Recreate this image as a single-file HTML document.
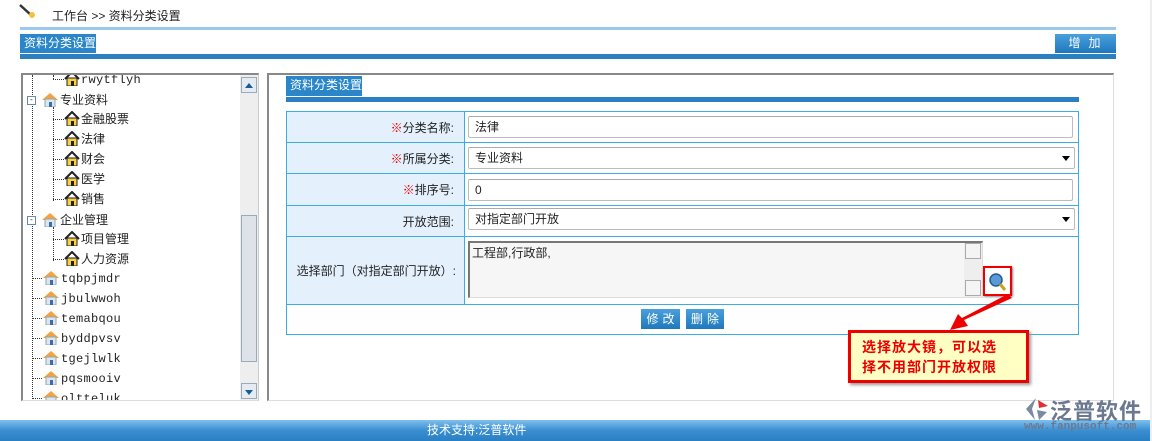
<!DOCTYPE html>
<html><head><meta charset="utf-8"><style>
*{margin:0;padding:0;box-sizing:border-box}
body{width:1152px;height:441px;overflow:hidden;background:#fff;font-family:"Liberation Sans","Noto Sans CJK SC",sans-serif;font-size:12px;color:#222;position:relative}
.a{position:absolute}
.tab{background:#2a86c8;color:#fff;font-size:12px;line-height:19px;padding-left:4px}
.bar{background:#2a80c0}
.tree div.r{position:absolute;left:0;height:20px;line-height:20px;font-size:12px;white-space:nowrap}
.mono{font-family:"Liberation Mono",monospace;font-size:11px;letter-spacing:0.3px}
.hm{display:inline-block;width:16px;height:15px;vertical-align:-3px;margin-right:1px}
td{border:1px solid #3aaee0}
.lab{background:#e4f1fd;text-align:right;padding-right:10px;width:178px}
.inp{position:absolute;border:1px solid #bbb;border-top-color:#aaa;border-radius:2px;background:#fff;height:22px;line-height:20px;padding-left:6px;font-size:12px}
.red{color:#e00}
.btn{position:absolute;background:linear-gradient(#4aa0dc,#1f78bd);color:#fff;text-align:center;line-height:20px;letter-spacing:4px;font-size:12px}
</style></head><body>
<svg class="a" style="left:18px;top:3px" width="20" height="16"><line x1="2" y1="2" x2="13" y2="12" stroke="#333" stroke-width="2.5"/><circle cx="14" cy="12" r="3" fill="#f6c23c"/></svg>
<div class="a" style="left:52px;top:7px;font-size:12px">工作台 &gt;&gt; 资料分类设置</div>
<div class="a" style="left:20px;top:27px;width:1096px;height:3px;background:#9ccaee"></div>
<div class="a tab" style="left:20px;top:34px;width:76px;height:19px">资料分类设置</div>
<div class="a btn" style="left:1055px;top:34px;width:61px;height:19px;line-height:19px;letter-spacing:8px;padding-left:6px">增加</div>
<div class="a bar" style="left:20px;top:54px;width:1096px;height:5px"></div>
<div class="a" style="left:1150px;top:0;width:2px;height:441px;background:#eee"></div>

<div class="a tree" style="left:21px;top:73px;width:238px;height:328px;border-top:2px solid #888;border-left:2px solid #888;border-right:1px solid #ccc;border-bottom:1px solid #ddd;overflow:hidden">
<div class="a" style="left:9px;top:0;height:330px;border-left:1px dotted #333"></div>
<div class="a" style="left:30px;top:0;height:4px;border-left:1px dotted #333"></div>
<div class="a" style="left:30px;top:32px;height:94px;border-left:1px dotted #333"></div>
<div class="a" style="left:30px;top:152px;height:34px;border-left:1px dotted #333"></div>
<div class="r mono" style="left:30px;top:-5px"><span style="border-top:1px dotted #333;display:inline-block;width:11px;vertical-align:middle"></span><svg class="hm" viewBox="0 0 16 15"><path d="M1 8L8 1L15 8" fill="none" stroke="#222" stroke-width="2"/><rect x="3" y="7" width="10" height="8" fill="#f8d040" stroke="#222"/><rect x="7" y="10" width="3" height="5" fill="#222"/></svg>rwytflyh</div>
<div class="r" style="left:4px;top:15px"><span style="display:inline-block;width:9px;height:9px;border:1px solid #6a8aa8;background:#fff;vertical-align:middle;font-size:8px;line-height:6px;text-align:center">-</span><svg class="hm" style="width:18px;margin-left:5px" viewBox="0 0 16 15"><path d="M0 8L8 1L16 8" fill="#f7a040"/><rect x="3" y="7" width="10" height="8" fill="#dbe6f2" stroke="#8aa"/><rect x="7" y="10" width="3" height="5" fill="#3d6ca8"/></svg>专业资料</div>
<div class="r" style="left:30px;top:34px"><span style="border-top:1px dotted #333;display:inline-block;width:11px;vertical-align:middle"></span><svg class="hm" viewBox="0 0 16 15"><path d="M1 8L8 1L15 8" fill="none" stroke="#222" stroke-width="2"/><rect x="3" y="7" width="10" height="8" fill="#f8d040" stroke="#222"/><rect x="7" y="10" width="3" height="5" fill="#222"/></svg>金融股票</div>
<div class="r" style="left:30px;top:54px"><span style="border-top:1px dotted #333;display:inline-block;width:11px;vertical-align:middle"></span><svg class="hm" viewBox="0 0 16 15"><path d="M1 8L8 1L15 8" fill="none" stroke="#222" stroke-width="2"/><rect x="3" y="7" width="10" height="8" fill="#f8d040" stroke="#222"/><rect x="7" y="10" width="3" height="5" fill="#222"/></svg>法律</div>
<div class="r" style="left:30px;top:74px"><span style="border-top:1px dotted #333;display:inline-block;width:11px;vertical-align:middle"></span><svg class="hm" viewBox="0 0 16 15"><path d="M1 8L8 1L15 8" fill="none" stroke="#222" stroke-width="2"/><rect x="3" y="7" width="10" height="8" fill="#f8d040" stroke="#222"/><rect x="7" y="10" width="3" height="5" fill="#222"/></svg>财会</div>
<div class="r" style="left:30px;top:94px"><span style="border-top:1px dotted #333;display:inline-block;width:11px;vertical-align:middle"></span><svg class="hm" viewBox="0 0 16 15"><path d="M1 8L8 1L15 8" fill="none" stroke="#222" stroke-width="2"/><rect x="3" y="7" width="10" height="8" fill="#f8d040" stroke="#222"/><rect x="7" y="10" width="3" height="5" fill="#222"/></svg>医学</div>
<div class="r" style="left:30px;top:114px"><span style="border-top:1px dotted #333;display:inline-block;width:11px;vertical-align:middle"></span><svg class="hm" viewBox="0 0 16 15"><path d="M1 8L8 1L15 8" fill="none" stroke="#222" stroke-width="2"/><rect x="3" y="7" width="10" height="8" fill="#f8d040" stroke="#222"/><rect x="7" y="10" width="3" height="5" fill="#222"/></svg>销售</div>
<div class="r" style="left:4px;top:135px"><span style="display:inline-block;width:9px;height:9px;border:1px solid #6a8aa8;background:#fff;vertical-align:middle;font-size:8px;line-height:6px;text-align:center">-</span><svg class="hm" style="width:18px;margin-left:5px" viewBox="0 0 16 15"><path d="M0 8L8 1L16 8" fill="#f7a040"/><rect x="3" y="7" width="10" height="8" fill="#dbe6f2" stroke="#8aa"/><rect x="7" y="10" width="3" height="5" fill="#3d6ca8"/></svg>企业管理</div>
<div class="r" style="left:30px;top:154px"><span style="border-top:1px dotted #333;display:inline-block;width:11px;vertical-align:middle"></span><svg class="hm" viewBox="0 0 16 15"><path d="M1 8L8 1L15 8" fill="none" stroke="#222" stroke-width="2"/><rect x="3" y="7" width="10" height="8" fill="#f8d040" stroke="#222"/><rect x="7" y="10" width="3" height="5" fill="#222"/></svg>项目管理</div>
<div class="r" style="left:30px;top:174px"><span style="border-top:1px dotted #333;display:inline-block;width:11px;vertical-align:middle"></span><svg class="hm" viewBox="0 0 16 15"><path d="M1 8L8 1L15 8" fill="none" stroke="#222" stroke-width="2"/><rect x="3" y="7" width="10" height="8" fill="#f8d040" stroke="#222"/><rect x="7" y="10" width="3" height="5" fill="#222"/></svg>人力资源</div>
<div class="r mono" style="left:9px;top:194px"><span style="border-top:1px dotted #333;display:inline-block;width:10px;vertical-align:middle"></span><svg class="hm" style="width:18px" viewBox="0 0 16 15"><path d="M0 8L8 1L16 8" fill="#f7a040"/><rect x="3" y="7" width="10" height="8" fill="#dbe6f2" stroke="#8aa"/><rect x="7" y="10" width="3" height="5" fill="#3d6ca8"/></svg>tqbpjmdr</div>
<div class="r mono" style="left:9px;top:214px"><span style="border-top:1px dotted #333;display:inline-block;width:10px;vertical-align:middle"></span><svg class="hm" style="width:18px" viewBox="0 0 16 15"><path d="M0 8L8 1L16 8" fill="#f7a040"/><rect x="3" y="7" width="10" height="8" fill="#dbe6f2" stroke="#8aa"/><rect x="7" y="10" width="3" height="5" fill="#3d6ca8"/></svg>jbulwwoh</div>
<div class="r mono" style="left:9px;top:234px"><span style="border-top:1px dotted #333;display:inline-block;width:10px;vertical-align:middle"></span><svg class="hm" style="width:18px" viewBox="0 0 16 15"><path d="M0 8L8 1L16 8" fill="#f7a040"/><rect x="3" y="7" width="10" height="8" fill="#dbe6f2" stroke="#8aa"/><rect x="7" y="10" width="3" height="5" fill="#3d6ca8"/></svg>temabqou</div>
<div class="r mono" style="left:9px;top:254px"><span style="border-top:1px dotted #333;display:inline-block;width:10px;vertical-align:middle"></span><svg class="hm" style="width:18px" viewBox="0 0 16 15"><path d="M0 8L8 1L16 8" fill="#f7a040"/><rect x="3" y="7" width="10" height="8" fill="#dbe6f2" stroke="#8aa"/><rect x="7" y="10" width="3" height="5" fill="#3d6ca8"/></svg>byddpvsv</div>
<div class="r mono" style="left:9px;top:274px"><span style="border-top:1px dotted #333;display:inline-block;width:10px;vertical-align:middle"></span><svg class="hm" style="width:18px" viewBox="0 0 16 15"><path d="M0 8L8 1L16 8" fill="#f7a040"/><rect x="3" y="7" width="10" height="8" fill="#dbe6f2" stroke="#8aa"/><rect x="7" y="10" width="3" height="5" fill="#3d6ca8"/></svg>tgejlwlk</div>
<div class="r mono" style="left:9px;top:294px"><span style="border-top:1px dotted #333;display:inline-block;width:10px;vertical-align:middle"></span><svg class="hm" style="width:18px" viewBox="0 0 16 15"><path d="M0 8L8 1L16 8" fill="#f7a040"/><rect x="3" y="7" width="10" height="8" fill="#dbe6f2" stroke="#8aa"/><rect x="7" y="10" width="3" height="5" fill="#3d6ca8"/></svg>pqsmooiv</div>
<div class="r mono" style="left:9px;top:314px"><span style="border-top:1px dotted #333;display:inline-block;width:10px;vertical-align:middle"></span><svg class="hm" style="width:18px" viewBox="0 0 16 15"><path d="M0 8L8 1L16 8" fill="#f7a040"/><rect x="3" y="7" width="10" height="8" fill="#dbe6f2" stroke="#8aa"/><rect x="7" y="10" width="3" height="5" fill="#3d6ca8"/></svg>oltteluk</div>
<div class="a" style="left:217px;top:0;width:18px;height:326px;background:#eee"></div>
<div class="a" style="left:218px;top:2px;width:16px;height:16px;background:#e4ecf2;border:1px solid #9ab"><div style="margin:5px auto 0;width:0;height:0;border:4px solid transparent;border-bottom:5px solid #1a5a9a;border-top:0"></div></div>
<div class="a" style="left:218px;top:140px;width:16px;height:147px;background:#dde3e8;border:1px solid #9ab"></div>
<div class="a" style="left:218px;top:308px;width:16px;height:16px;background:#e4ecf2;border:1px solid #9ab"><div style="margin:6px auto 0;width:0;height:0;border:4px solid transparent;border-top:5px solid #1a5a9a;border-bottom:0"></div></div>
</div>

<div class="a" style="left:267px;top:73px;width:847px;height:328px;border-top:2px solid #888;border-left:2px solid #888;border-right:1px solid #ddd;border-bottom:1px solid #ddd"></div>
<div class="a tab" style="left:286px;top:76px;width:76px;height:20px">资料分类设置</div>
<div class="a bar" style="left:286px;top:97px;width:793px;height:5px"></div>

<table class="a" style="left:286px;top:111px;width:793px;border-collapse:collapse;font-size:12px">
<tr style="height:31px"><td class="lab"><span class="red">※</span>分类名称:</td><td></td></tr>
<tr style="height:31px"><td class="lab"><span class="red">※</span>所属分类:</td><td></td></tr>
<tr style="height:32px"><td class="lab"><span class="red">※</span>排序号:</td><td></td></tr>
<tr style="height:31px"><td class="lab">开放范围:</td><td></td></tr>
<tr style="height:68px"><td class="lab" style="padding-right:8px">选择部门（对指定部门开放）:</td><td></td></tr>
<tr style="height:30px"><td colspan="2"></td></tr>
</table>
<div class="inp" style="left:468px;top:116px;width:605px">法律</div>
<div class="inp" style="left:468px;top:147px;width:607px">专业资料<span style="position:absolute;right:4px;top:8px;border:4px solid transparent;border-top:5px solid #000"></span></div>
<div class="inp" style="left:468px;top:179px;width:605px">0</div>
<div class="inp" style="left:468px;top:208px;width:607px">对指定部门开放<span style="position:absolute;right:4px;top:8px;border:4px solid transparent;border-top:5px solid #000"></span></div>
<div class="a" style="left:468px;top:241px;width:515px;height:57px;background:#f6f6f6;border:2px solid #777;border-right:1px solid #ddd;border-bottom:1px solid #ddd;padding:1px 2px;font-size:12px">工程部,行政部,</div>
<div class="a" style="left:964px;top:243px;width:18px;height:54px;background:#eee"></div>
<div class="a" style="left:965px;top:243px;width:16px;height:16px;background:#f4f4f4;border:1px solid #aaa"></div>
<div class="a" style="left:965px;top:280px;width:16px;height:16px;background:#f4f4f4;border:1px solid #aaa"></div>
<div class="a" style="left:983px;top:266px;width:29px;height:30px;border:2px solid #e00;box-shadow:1px 1px 2px #888"></div>
<svg class="a" style="left:988px;top:272px" width="20" height="20"><circle cx="8" cy="8" r="6" fill="#5a9ad8" stroke="#245a90" stroke-width="1.5"/><line x1="12" y1="12" x2="17" y2="18" stroke="#c8a020" stroke-width="3"/></svg>
<div class="btn" style="left:641px;top:309px;width:39px;height:20px;padding-left:4px">修改</div>
<div class="btn" style="left:686px;top:309px;width:38px;height:20px;padding-left:4px">删除</div>

<svg class="a" style="left:940px;top:290px" width="80" height="50"><polygon points="68,4 72,8 24,30 28,36 10,40 18,24 22,28" fill="#e00"/></svg>
<div class="a" style="left:848px;top:330px;width:181px;height:53px;background:#ffffc4;border:3px solid #e00;box-shadow:2px 2px 3px #999;color:#e00;font-weight:bold;font-size:14px;line-height:20px;padding:4px 0 0 11px;letter-spacing:1px">选择放大镜，可以选<br>择不用部门开放权限</div>

<div class="a" style="left:0;top:420px;width:1150px;height:21px;background:linear-gradient(#7ec0ee,#3a8ed0 50%,#2a80c4)"></div>
<div class="a" style="left:427px;top:420px;color:#fff;line-height:20px;font-size:12px">技术支持:泛普软件</div>
<svg class="a" style="left:1022px;top:396px" width="28" height="26"><path d="M14 2L4 13L13 24L10 13Z" fill="#7a8aa0"/><path d="M16 4L26 10L17 12Z" fill="#e03030"/><path d="M15 14L25 16L17 24Z" fill="#7a8aa0"/></svg>
<div class="a" style="left:1050px;top:394px;font-size:22px;color:#6a7890;letter-spacing:1px;font-weight:bold">泛普软件</div>
<div class="a" style="left:1024px;top:421px;font-size:11px;color:#6a7890;font-family:'Liberation Mono',monospace;font-weight:bold">www.fanpusoft.com</div>
</body></html>
